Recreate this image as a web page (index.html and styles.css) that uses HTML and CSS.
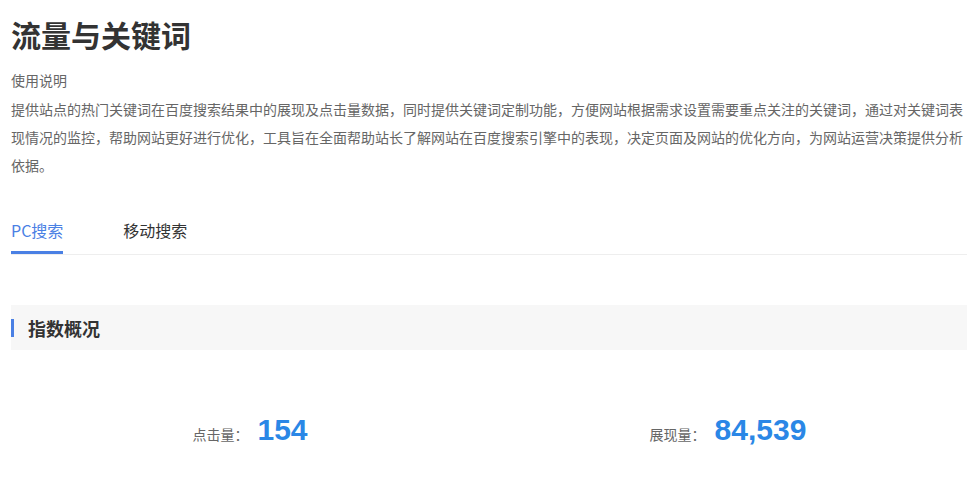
FILE: index.html
```html
<!DOCTYPE html>
<html lang="zh-CN">
<head>
<meta charset="utf-8">
<title>流量与关键词</title>
<link rel="stylesheet" href="styles.css">
</head>
<body>
<div class="page">
  <h1 class="title">流量与关键词</h1>
  <div class="usage-label">使用说明</div>
  <p class="usage-text">提供站点的热门关键词在百度搜索结果中的展现及点击量数据，同时提供关键词定制功能，方便网站根据需求设置需要重点关注的关键词，通过对关键词表现情况的监控，帮助网站更好进行优化，工具旨在全面帮助站长了解网站在百度搜索引擎中的表现，决定页面及网站的优化方向，为网站运营决策提供分析依据。</p>
  <div class="tabs">
    <div class="tab active">PC搜索</div>
    <div class="tab">移动搜索</div>
  </div>
  <div class="section-head">指数概况</div>
  <div class="stats">
    <div class="stat"><span class="stat-label">点击量：</span><span class="stat-value">154</span></div>
    <div class="stat"><span class="stat-label">展现量：</span><span class="stat-value">84,539</span></div>
  </div>
</div>
</body>
</html>
```
FILE: styles.css
```css
html, body {
  margin: 0;
  padding: 0;
  background: #fff;
}
body {
  font-family: "Noto Sans CJK SC", "Microsoft YaHei", sans-serif;
  color: #333;
}
.page {
  width: 956px;
  padding-left: 11px;
}
.title {
  margin: 14px 0 0;
  font-size: 30px;
  line-height: 40px;
  font-weight: 700;
  color: #333;
}
.usage-label {
  margin-top: 12px;
  font-size: 14px;
  line-height: 28px;
  color: #666;
}
.usage-text {
  margin: 1px 0 0;
  font-size: 14px;
  line-height: 28px;
  color: #666;
}
.tabs {
  display: flex;
  gap: 60px;
  margin-top: 40px;
  border-bottom: 1px solid #eee;
}
.tab {
  font-size: 16px;
  line-height: 22px;
  padding-bottom: 10px;
  border-bottom: 3px solid transparent;
  color: #333;
}
.tab.active {
  color: #4a80e4;
  border-bottom-color: #4a80e4;
}
.section-head {
  display: flex;
  align-items: center;
  margin-top: 50px;
  height: 45px;
  background: #f7f7f7;
  font-size: 18px;
  font-weight: 700;
  color: #333;
}
.section-head::before {
  content: "";
  width: 3px;
  height: 18px;
  background: #4a80e4;
  margin-right: 14px;
}
.stats {
  display: grid;
  grid-template-columns: 1fr 1fr;
  margin-top: 60px;
}
.stat {
  display: flex;
  justify-content: center;
  align-items: baseline;
  gap: 9px;
}
.stat-label {
  font-size: 14px;
  color: #666;
}
.stat-value {
  font-family: "Liberation Sans", Arial, sans-serif;
  font-size: 30px;
  line-height: 40px;
  font-weight: 700;
  color: #2a87e6;
}
```
